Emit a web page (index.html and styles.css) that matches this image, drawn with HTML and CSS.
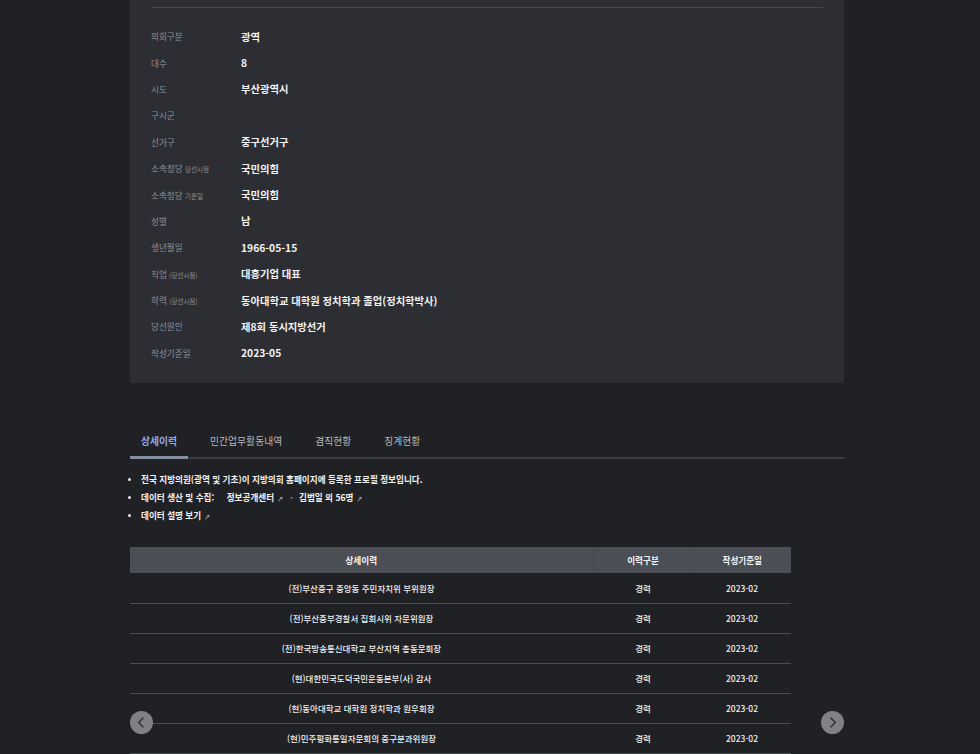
FILE: index.html
```html
<!DOCTYPE html>
<html lang="ko">
<head>
<meta charset="utf-8">
<title>의원 상세정보</title>
<link rel="stylesheet" href="styles.css">
</head>
<body>
<main class="page">
  <section class="card">
    <div class="card-rule"></div>
    <dl class="info">
      <div class="row"><dt>의회구분</dt><dd>광역</dd></div>
      <div class="row"><dt>대수</dt><dd>8</dd></div>
      <div class="row"><dt>시도</dt><dd>부산광역시</dd></div>
      <div class="row"><dt>구시군</dt><dd></dd></div>
      <div class="row"><dt>선거구</dt><dd>중구선거구</dd></div>
      <div class="row"><dt>소속정당 <small>당선시점</small></dt><dd>국민의힘</dd></div>
      <div class="row"><dt>소속정당 <small>기준일</small></dt><dd>국민의힘</dd></div>
      <div class="row"><dt>성별</dt><dd>남</dd></div>
      <div class="row"><dt>생년월일</dt><dd>1966-05-15</dd></div>
      <div class="row"><dt>직업 <small>(당선시점)</small></dt><dd>대흥기업 대표</dd></div>
      <div class="row"><dt>학력 <small>(당선시점)</small></dt><dd>동아대학교 대학원 정치학과 졸업(정치학박사)</dd></div>
      <div class="row"><dt>당선원인</dt><dd>제8회 동시지방선거</dd></div>
      <div class="row"><dt>작성기준일</dt><dd>2023-05</dd></div>
    </dl>
  </section>

  <nav class="tabs">
    <span class="tab active">상세이력</span>
    <span class="tab">민간업무활동내역</span>
    <span class="tab">겸직현황</span>
    <span class="tab">징계현황</span>
  </nav>

  <ul class="notes">
    <li>전국 지방의원(광역 및 기초)이 지방의회 홈페이지에 등록한 프로필 정보입니다.</li>
    <li>데이터 생산 및 수집: <span class="src">정보공개센터<span class="ext">↗</span></span><span class="dot">·</span><span class="src2">김범일 외 56명<span class="ext">↗</span></span></li>
    <li>데이터 설명 보기<span class="ext">↗</span></li>
  </ul>

  <div class="carousel">
    <table class="history">
      <colgroup><col class="c1"><col class="c2"><col class="c3"></colgroup>
      <thead>
        <tr><th>상세이력</th><th>이력구분</th><th>작성기준일</th></tr>
      </thead>
      <tbody>
        <tr><td>(전)부산중구 중앙동 주민자치위 부위원장</td><td>경력</td><td>2023-02</td></tr>
        <tr><td>(전)부산중부경찰서 집회시위 자문위원장</td><td>경력</td><td>2023-02</td></tr>
        <tr><td>(전)한국방송통신대학교 부산지역 총동문회장</td><td>경력</td><td>2023-02</td></tr>
        <tr><td>(현)대한민국도덕국민운동본부(사) 감사</td><td>경력</td><td>2023-02</td></tr>
        <tr><td>(현)동아대학교 대학원 정치학과 원우회장</td><td>경력</td><td>2023-02</td></tr>
        <tr><td>(현)민주평화통일자문회의 중구분과위원장</td><td>경력</td><td>2023-02</td></tr>
      </tbody>
    </table>
    <button class="nav prev" aria-label="이전"><svg viewBox="0 0 24 24" width="23" height="23"><polyline points="14,7 9,12 14,17" fill="none" stroke="#2a2c30" stroke-width="1.4"/></svg></button>
    <button class="nav next" aria-label="다음"><svg viewBox="0 0 24 24" width="23" height="23"><polyline points="10,7 15,12 10,17" fill="none" stroke="#2a2c30" stroke-width="1.4"/></svg></button>
  </div>
</main>
</body>
</html>
```

FILE: styles.css
```css
* { box-sizing: border-box; }
html, body {
  margin: 0;
  padding: 0;
  background: #1f2125;
  font-family: "Noto Sans CJK KR", "Noto Sans", sans-serif;
  color: #eceded;
  height: 754px;
  overflow: hidden;
}
.page {
  width: 714px;
  margin-left: 130px;
}
.card {
  background: #2c2e33;
  padding: 7px 21px 17px;
}
.card-rule {
  height: 1px;
  background: #45484d;
  margin-bottom: 15px;
}
.info { margin: 0; }
.row {
  display: flex;
  align-items: center;
  height: 26.4px;
}
.row dt {
  width: 90px;
  font-size: 8.6px;
  color: #8f9196;
}
.row dt small {
  font-size: 6.5px;
  color: #8f9196;
}
.row dd {
  margin: 0;
  font-size: 10.3px;
  font-weight: 700;
  color: #f3f3f3;
}
.tabs {
  display: flex;
  gap: 11px;
  margin-top: 44px;
  border-bottom: 2px solid #3a3d42;
}
.tab {
  padding: 7px 11px 8px;
  font-size: 9.8px;
  line-height: 14px;
  color: #b6b8bc;
  margin-bottom: -2px;
  border-bottom: 3px solid transparent;
}
.tab.active {
  color: #8eaae6;
  font-weight: 700;
  border-bottom-color: #858da0;
}
.notes {
  margin: 11px 0 0;
  padding-left: 11px;
  list-style: none;
}
.notes li {
  font-size: 8.6px;
  font-weight: 700;
  line-height: 18px;
  height: 18px;
  color: #f3f3f3;
  position: relative;
}
.notes li::before {
  content: "";
  position: absolute;
  left: -13px;
  top: 8px;
  width: 3px;
  height: 3px;
  border-radius: 50%;
  background: #e8e8e8;
}
.src { margin-left: 10px; }
.dot { margin: 0 6px 0 7px; color: #aaa; }
.ext {
  font-size: 6px;
  line-height: 0;
  margin-left: 3px;
  color: #bbb;
}
.carousel {
  position: relative;
  margin-top: 23px;
}
.history {
  width: 661px;
  border-collapse: collapse;
  table-layout: fixed;
}
.c1 { width: 463px; }
.c2 { width: 100px; }
.c3 { width: 98px; }
.history th {
  background: #4b4e54;
  height: 26px;
  font-size: 8.6px;
  font-weight: 700;
  color: #f4f4f4;
  padding: 0;
  border-left: 1px solid #44474c;
}
.history th:first-child { border-left: none; }
.history td {
  height: 30px;
  font-size: 8.5px;
  font-weight: 500;
  text-align: center;
  color: #f0f0f0;
  padding: 0;
  border-bottom: 1px solid #4a4d52;
}
.nav {
  position: absolute;
  top: 164px;
  width: 23px;
  height: 23px;
  padding: 0;
  border: none;
  border-radius: 50%;
  background: #7f8186;
  display: flex;
  align-items: center;
  justify-content: center;
}
.nav.prev { left: 0; }
.nav.next { right: 0; }
```
